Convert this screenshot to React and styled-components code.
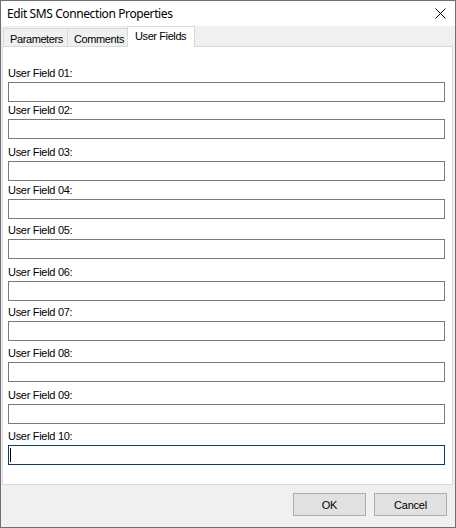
import styled, { createGlobalStyle } from "styled-components";

const GlobalStyle = createGlobalStyle`
  body {
    margin: 0;
    background: #ffffff;
    font-family: "Liberation Sans", Arial, sans-serif;
  }
`;

const Window = styled.div`
  display: flex;
  flex-direction: column;
  box-sizing: border-box;
  width: 456px;
  height: 528px;
  border: 1px solid #6f6f6f;
  background: #f0f0f0;
`;

const TitleBar = styled.div`
  display: flex;
  align-items: center;
  justify-content: space-between;
  height: 25px;
  padding: 0 9px 0 6px;
  background: #ffffff;
  font-family: "Noto Sans", "Open Sans", sans-serif;
  font-size: 12px;
  letter-spacing: -0.4px;
  color: #000000;
`;

const CloseIcon = () => (
  <svg width="11" height="11" viewBox="0 0 11 11">
    <path d="M0.5 0.5 L10.5 10.5 M10.5 0.5 L0.5 10.5" stroke="#000" strokeWidth="1" fill="none" />
  </svg>
);

const TabStrip = styled.div`
  display: flex;
  align-items: flex-end;
  height: 20px;
  padding-left: 2px;
`;

const Tab = styled.div`
  box-sizing: border-box;
  width: ${(p) => p.$width}px;
  height: ${(p) => (p.$active ? 21 : 18)}px;
  padding: ${(p) => (p.$active ? "3px 0 0 7px" : "4px 0 0 6px")};
  margin-left: ${(p) => (p.$active ? -1 : 0)}px;
  margin-bottom: ${(p) => (p.$active ? -1 : 0)}px;
  border: 1px solid #d9d9d9;
  border-bottom: none;
  border-left-width: ${(p) => (p.$first || p.$active ? 1 : 0)}px;
  background: ${(p) => (p.$active ? "#ffffff" : "#f0f0f0")};
  position: relative;
  z-index: ${(p) => (p.$active ? 1 : 0)};
  font-size: 11px;
  line-height: 13px;
  letter-spacing: -0.4px;
  color: #000000;
  white-space: nowrap;
`;

const Page = styled.div`
  box-sizing: border-box;
  height: 439px;
  margin: 0 2px 0 1px;
  padding: 20px 7px 0 5px;
  border: 1px solid #d9d9d9;
  background: #ffffff;
`;

const Field = styled.div`
  display: flex;
  flex-direction: column;
  gap: 2px;
  margin-top: ${(p) => p.$gap}px;
`;

const Label = styled.div`
  font-size: 11px;
  line-height: 13px;
  height: 13px;
  letter-spacing: -0.3px;
  color: #000000;
`;

const TextBox = styled.div`
  box-sizing: border-box;
  height: 20px;
  border: 1px solid ${(p) => (p.$focused ? "#0b3c6c" : "#7a7a7a")};
  background: #ffffff;
  display: flex;
  align-items: center;
  padding-left: 1px;
`;

const Caret = styled.span`
  width: 1px;
  height: 14px;
  background: #000000;
`;

const Footer = styled.div`
  display: flex;
  justify-content: flex-end;
  gap: 8px;
  padding: 8px 8px 0 0;
  flex: 1;
`;

const Button = styled.div`
  box-sizing: border-box;
  width: 73px;
  height: 23px;
  display: flex;
  align-items: center;
  justify-content: center;
  border: 1px solid #adadad;
  background: #e1e1e1;
  font-size: 11px;
  letter-spacing: -0.2px;
  color: #000000;
`;

const gaps = [0, 2, 7, 3, 5, 7, 5, 6, 7, 6];

function App() {
  return (
    <>
      <GlobalStyle />
      <Window>
        <TitleBar>
          <span>Edit SMS Connection Properties</span>
          <CloseIcon />
        </TitleBar>
        <TabStrip>
          <Tab $first $width={65}>Parameters</Tab>
          <Tab $width={60}>Comments</Tab>
          <Tab $active $width={68}>User Fields</Tab>
        </TabStrip>
        <Page>
          {gaps.map((gap, i) => {
            const num = String(i + 1).padStart(2, "0");
            const last = i === gaps.length - 1;
            return (
              <Field key={num} $gap={gap}>
                <Label>User Field {num}:</Label>
                <TextBox $focused={last}>{last && <Caret />}</TextBox>
              </Field>
            );
          })}
        </Page>
        <Footer>
          <Button>OK</Button>
          <Button>Cancel</Button>
        </Footer>
      </Window>
    </>
  );
}

export default App;
